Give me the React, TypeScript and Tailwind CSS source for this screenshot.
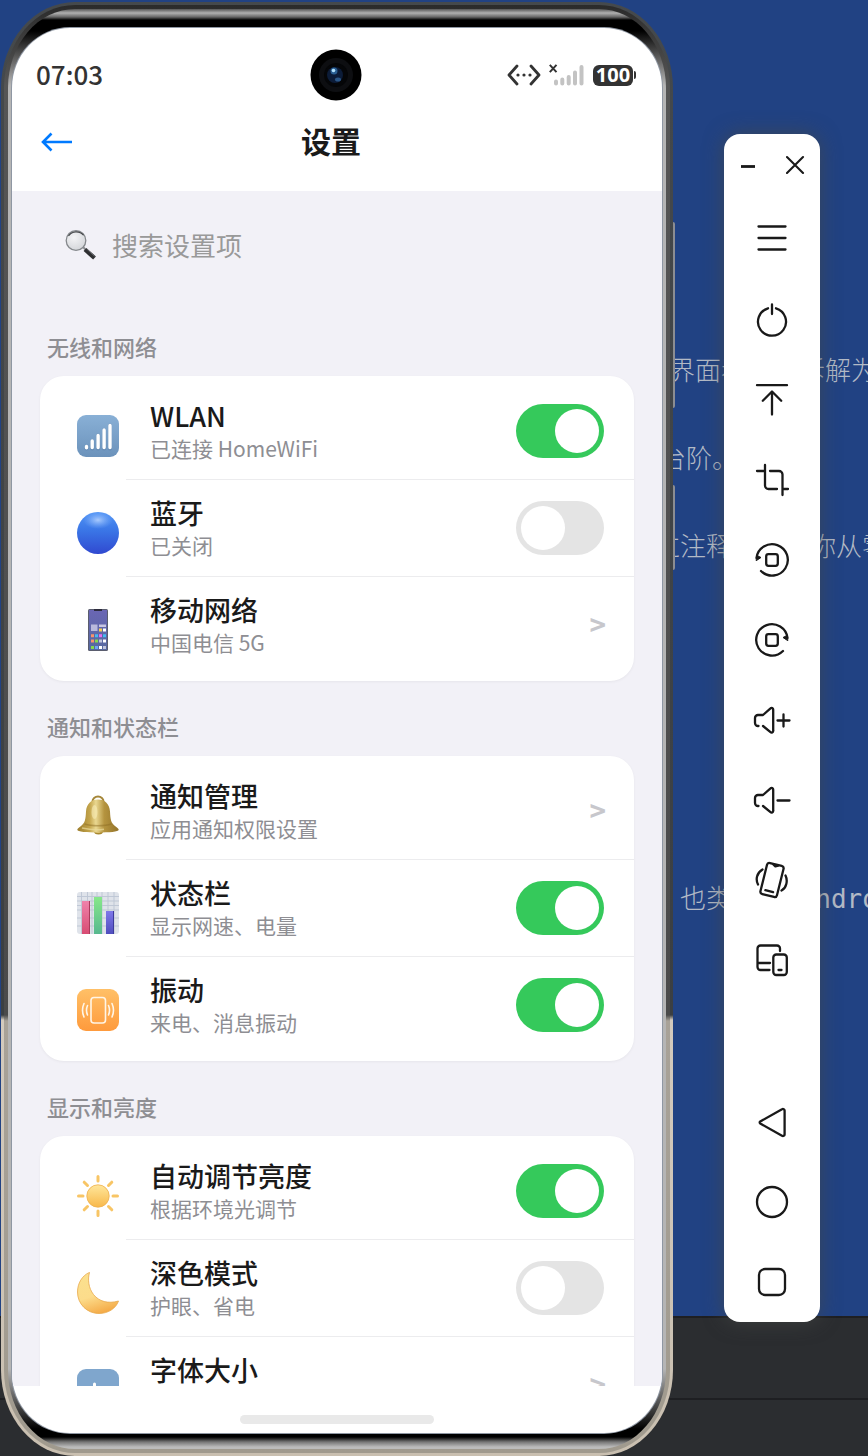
import React, { useState } from 'react';

interface SettingItem {
  id: string;
  title: string;
  subtitle: string;
  icon: React.ReactNode;
  kind: 'toggle' | 'link';
  enabled?: boolean;
}

interface SettingSection {
  title: string;
  items: SettingItem[];
}

const SearchIcon = () => (
  <svg viewBox="0 0 32 32" className="h-8 w-8 shrink-0" aria-hidden="true">
    <defs>
      <radialGradient id="lens" cx="0.4" cy="0.35" r="0.7">
        <stop offset="0" stopColor="#f4f4f6" />
        <stop offset="1" stopColor="#d3d5d9" />
      </radialGradient>
    </defs>
    <path d="M17.500 17.500 22 22" stroke="#8b8d90" strokeWidth="2" />
    <path d="m20 20.500 9.500 8.500" stroke="#2e2f31" strokeWidth="4.200" strokeLinecap="butt" />
    <path d="m21.500 19.800 8 7.500" stroke="#6d6f72" strokeWidth="0.800" />
    <circle cx="11" cy="11.500" r="9.800" fill="url(#lens)" stroke="#85888c" strokeWidth="1.300" />
    <path d="M3.500 7a9.400 9.400 0 0 1 15-.8" stroke="#46484b" strokeWidth="1.200" fill="none" />
  </svg>
);

const WlanIcon = () => (
  <svg viewBox="0 0 42 42" className="h-full w-full" aria-hidden="true">
    <defs>
      <linearGradient id="wlan" x1="0" y1="0" x2="0" y2="1">
        <stop offset="0" stopColor="#89b0d6" />
        <stop offset="1" stopColor="#6b92bb" />
      </linearGradient>
    </defs>
    <rect width="42" height="42" rx="9" fill="url(#wlan)" />
    <path d="M9.500 32v1.500M15.200 26.500v7M21.100 20.500v13M27.100 15v18.500M33 10.500v23" stroke="#5478a0" strokeWidth="4" strokeLinecap="round" opacity=".4" />
    <path d="M9.500 31.500v1.200M15.200 26v6.500M21.100 20.500v12M27.100 15v17.500M33 10.500v22" stroke="#fff" strokeWidth="3.400" strokeLinecap="round" />
  </svg>
);

const BluetoothIcon = () => (
  <svg viewBox="0 0 42 42" className="h-full w-full" aria-hidden="true">
    <defs>
      <linearGradient id="ball" x1="0" y1="0" x2="0" y2="1">
        <stop offset="0" stopColor="#4f93f5" />
        <stop offset=".45" stopColor="#3a75e6" />
        <stop offset="1" stopColor="#3049d0" />
      </linearGradient>
      <radialGradient id="shine">
        <stop offset="0" stopColor="#b5d2ff" stopOpacity=".9" />
        <stop offset="1" stopColor="#7fb0fa" stopOpacity="0" />
      </radialGradient>
    </defs>
    <circle cx="21" cy="21" r="21" fill="url(#ball)" />
    <ellipse cx="21" cy="8" rx="15" ry="9" fill="url(#shine)" />
  </svg>
);

const MobileIcon = () => (
  <svg viewBox="0 0 42 42" className="h-full w-full" aria-hidden="true">
    <defs>
      <linearGradient id="mobile" x1="0" y1="0" x2="0" y2="1">
        <stop offset="0" stopColor="#6a66b4" />
        <stop offset="1" stopColor="#56689f" />
      </linearGradient>
    </defs>
    <rect x="11" y="0" width="20" height="42" rx="1.500" fill="#5a5d6e" />
    <rect x="12" y="1" width="18" height="40" fill="url(#mobile)" />
    <rect x="17" y="0" width="8" height="2" fill="#2d2c3d" />
    <rect x="14" y="15.500" width="6.500" height="6.500" fill="#b9b9dc" />
    <rect x="22" y="15.500" width="7" height="2.500" fill="#c8c6e2" />
    <rect x="22" y="19.500" width="3" height="3" fill="#f5cf52" />
    <rect x="26" y="19.500" width="3" height="3" fill="#fff" />
    <path d="M14 25.200h3v3h-3zM14 30.500h3v3h-3z" fill="#f7936d" />
    <path d="M18 25.200h3v3h-3zM26 25.200h3v3h-3z" fill="#45b9f2" />
    <path d="M22 25.200h3v3h-3z" fill="#e56df0" />
    <path d="M18 30.500h3v3h-3zM14 37h3v3h-3z" fill="#84d84f" />
    <path d="M22 30.500h3v3h-3zM26 37h3v3h-3z" fill="#bfc3dc" />
    <path d="M26 30.500h3v3h-3zM22 37h3v3h-3z" fill="#fff" />
    <path d="M18 37h3v3h-3z" fill="#6ea6f5" />
  </svg>
);

const BellIcon = () => (
  <svg viewBox="0 0 42 42" className="h-full w-full" aria-hidden="true">
    <defs>
      <linearGradient id="bell" x1="0" y1="0" x2="1" y2="0">
        <stop offset="0" stopColor="#9c7d2c" />
        <stop offset=".3" stopColor="#c4a54c" />
        <stop offset=".45" stopColor="#ead891" />
        <stop offset=".65" stopColor="#b5943f" />
        <stop offset="1" stopColor="#94742a" />
      </linearGradient>
    </defs>
    <path d="M15.500 6.500a5.500 5 0 0 1 11 0" fill="none" stroke="#a5873a" strokeWidth="2" />
    <ellipse cx="21.500" cy="36.500" rx="4.500" ry="3" fill="#a8882f" />
    <path d="M21 4.500c-7 0-11.500 4.500-12 12-.4 8-1 11.500-5 14.500C1.500 32.800.3 33.800.3 34.800.3 37 10 37.500 21 37.500s20.700-.5 20.700-2.700c0-1-1.200-2-3.700-3.800-4-3-4.600-6.500-5-14.500-.5-7.500-5-12-12-12Z" fill="url(#bell)" />
    <path d="M7.500 29c7 2.300 20 2.300 27 0" fill="none" stroke="#8d6e24" strokeWidth="1.500" opacity=".5" />
    <path d="M5 33c8 1.800 17 2 22 1.200" fill="none" stroke="#eadb9c" strokeWidth="1.500" opacity=".7" />
    <ellipse cx="17.500" cy="17" rx="3" ry="7" fill="#f8edb8" opacity=".6" />
    <path d="M18.500 37a3 2.200 0 0 0 5 0" fill="#dbc377" />
  </svg>
);

const ChartIcon = () => (
  <svg viewBox="0 0 42 42" className="h-full w-full" aria-hidden="true">
    <defs>
      <linearGradient id="pinkBar" x1="0" y1="0" x2="0" y2="1">
        <stop offset="0" stopColor="#ef82ab" />
        <stop offset="1" stopColor="#d84c73" />
      </linearGradient>
      <linearGradient id="greenBar" x1="0" y1="0" x2="0" y2="1">
        <stop offset="0" stopColor="#87e88a" />
        <stop offset="1" stopColor="#57b88f" />
      </linearGradient>
      <linearGradient id="blueBar" x1="0" y1="0" x2="0" y2="1">
        <stop offset="0" stopColor="#7f78ea" />
        <stop offset="1" stopColor="#4f4dbd" />
      </linearGradient>
    </defs>
    <rect width="42" height="42" rx="3" fill="#dfe3ea" />
    <path d="M4.500 0v42M10.500 0v42M15 0v42M20 0v42M25 0v42M31 0v42M37 0v42M0 4.500h42M0 9h42M0 13.500h42M0 18h42M0 26h42M0 34h42" stroke="#bcc5d4" strokeWidth=".9" />
    <path d="M5 9h8v33H5z" fill="url(#pinkBar)" />
    <path d="M17 5h8v37h-8z" fill="url(#greenBar)" />
    <path d="M29 19h8v23h-8z" fill="url(#blueBar)" />
    <path d="M12.500 9v33" stroke="#a93b5c" />
    <path d="M36.500 19v23" stroke="#3d3b9b" />
  </svg>
);

const VibrateIcon = () => (
  <svg viewBox="0 0 42 42" className="h-full w-full" aria-hidden="true">
    <defs>
      <linearGradient id="vibrate" x1="0" y1="0" x2="0" y2="1">
        <stop offset="0" stopColor="#ffc067" />
        <stop offset="1" stopColor="#fe9a3c" />
      </linearGradient>
    </defs>
    <rect width="42" height="42" rx="9" fill="url(#vibrate)" />
    <g fill="none" stroke="#fff5e6" strokeWidth="1.600" strokeLinecap="round">
      <rect x="14" y="8.500" width="14.500" height="25.500" rx="3" />
      <path d="M10.500 16.500c-1.300 3-1.300 6.500 0 9.500M7 14.500c-2 4.500-2 9 0 13.500M31.500 16.500c1.300 3 1.300 6.500 0 9.500M35 14.500c2 4.500 2 9 0 13.500" />
    </g>
  </svg>
);

const SunIcon = () => (
  <svg viewBox="0 0 42 42" className="h-full w-full" aria-hidden="true">
    <defs>
      <linearGradient id="sun" x1="0" y1="0" x2="0" y2="1">
        <stop offset="0" stopColor="#ffe79c" />
        <stop offset="1" stopColor="#f8b84a" />
      </linearGradient>
    </defs>
    <path d="M21 1.500v4.500M21 36v4.500M1.500 21H6M36 21h4.500M7.200 7.200l3.300 3.300M31.500 31.500l3.300 3.300M34.800 7.200l-3.300 3.300M10.500 31.500l-3.300 3.300" stroke="#f8c565" strokeWidth="3" strokeLinecap="round" />
    <circle cx="21" cy="21" r="11.200" fill="url(#sun)" stroke="#edb04e" strokeWidth=".8" />
  </svg>
);

const MoonIcon = () => (
  <svg viewBox="0 0 42 42" className="h-full w-full" aria-hidden="true">
    <defs>
      <linearGradient id="moon" x1="0.300" y1="0" x2="0.600" y2="1">
        <stop offset="0" stopColor="#fbe08e" />
        <stop offset=".55" stopColor="#fcdc8b" />
        <stop offset="1" stopColor="#f4a945" />
      </linearGradient>
    </defs>
    <path d="M12.500.4C5 3.500.5 11.500.5 20c0 12 9.500 21.500 21.500 21.500 9 0 17-5 19.500-12.500C31 32 22 29.500 16.500 22.500 11.500 16 10.500 7.500 12.500.4Z" fill="url(#moon)" stroke="#e9a84a" strokeWidth=".8" />
  </svg>
);

const FontSizeIcon = () => (
  <svg viewBox="0 0 42 42" className="h-full w-full" aria-hidden="true">
    <rect width="42" height="42" rx="9" fill="#7fa6cd" />
    <path d="M17.500 15v17M17.500 22.500c4-3.500 9.500-1.500 9.500 4s-5.500 8-9.500 4" stroke="#fff" strokeWidth="3" strokeLinecap="round" fill="none" />
  </svg>
);

const SECTIONS: SettingSection[] = [
  {
    title: '无线和网络',
    items: [
      { id: 'wlan', title: 'WLAN', subtitle: '已连接 HomeWiFi', icon: <WlanIcon />, kind: 'toggle', enabled: true },
      { id: 'bluetooth', title: '蓝牙', subtitle: '已关闭', icon: <BluetoothIcon />, kind: 'toggle', enabled: false },
      { id: 'mobile', title: '移动网络', subtitle: '中国电信 5G', icon: <MobileIcon />, kind: 'link' },
    ],
  },
  {
    title: '通知和状态栏',
    items: [
      { id: 'notify', title: '通知管理', subtitle: '应用通知权限设置', icon: <BellIcon />, kind: 'link' },
      { id: 'statusbar', title: '状态栏', subtitle: '显示网速、电量', icon: <ChartIcon />, kind: 'toggle', enabled: true },
      { id: 'vibrate', title: '振动', subtitle: '来电、消息振动', icon: <VibrateIcon />, kind: 'toggle', enabled: true },
    ],
  },
  {
    title: '显示和亮度',
    items: [
      { id: 'brightness', title: '自动调节亮度', subtitle: '根据环境光调节', icon: <SunIcon />, kind: 'toggle', enabled: true },
      { id: 'dark', title: '深色模式', subtitle: '护眼、省电', icon: <MoonIcon />, kind: 'toggle', enabled: false },
      { id: 'font', title: '字体大小', subtitle: '标准', icon: <FontSizeIcon />, kind: 'link' },
    ],
  },
];

const SettingRow: React.FC<{ item: SettingItem }> = ({ item }) => {
  const [on, setOn] = useState(Boolean(item.enabled));

  const body = (
    <>
      <span className="mt-2.5 block h-[42px] w-[42px] shrink-0">{item.icon}</span>
      <span className="block min-w-0 flex-1 pb-0.5">
        <span className="block truncate text-[27px] leading-9 font-medium text-[#1a1a1a]">{item.title}</span>
        <span className="block truncate text-[21px] leading-7 text-[#8e8e93]">{item.subtitle}</span>
      </span>
    </>
  );

  if (item.kind === 'link') {
    return (
      <a href={`#${item.id}`} className="flex h-24 items-center gap-[31px] pr-7 pl-[37px]">
        {body}
        <span className="pb-0.5 text-[28px] font-bold text-[#c7c7cc]">&gt;</span>
      </a>
    );
  }

  return (
    <label htmlFor={item.id} className="flex h-24 items-center gap-[31px] pr-[30px] pl-[37px]">
      {body}
      <input
        id={item.id}
        type="checkbox"
        role="switch"
        checked={on}
        onChange={() => setOn(!on)}
        className="h-[54px] w-22 shrink-0 appearance-none rounded-full bg-[#e4e4e4] p-[5px] transition-colors before:block before:h-11 before:w-11 before:rounded-full before:bg-white before:content-[''] checked:bg-[#35c95b] checked:before:translate-x-[34px]"
      />
    </label>
  );
};

const StatusBar = () => (
  <div className="grid h-[94px] shrink-0 grid-cols-[1fr_auto_1fr] items-center pr-[26px] pl-6">
    <time className="pb-1 text-[26px] font-medium text-[#333]">07:03</time>
    <svg viewBox="0 0 52 52" className="h-[52px] w-[52px]" aria-hidden="true">
      <circle cx="26" cy="26" r="25.500" fill="#000" />
      <circle cx="26" cy="26" r="17" fill="#0d0e11" />
      <circle cx="26" cy="26" r="12" fill="#050608" />
      <circle cx="25" cy="26" r="8" fill="#0c1c38" />
      <circle cx="24" cy="22" r="3.500" fill="#2a5f93" />
      <circle cx="23.500" cy="21.500" r="1.800" fill="#b4e2fb" />
      <ellipse cx="28" cy="30.500" rx="3" ry="2" fill="#2b5788" />
    </svg>
    <div className="flex items-center justify-end gap-2">
      <svg viewBox="0 0 34 22" className="h-[22px] w-[34px]" aria-hidden="true">
        <path d="M10 2 2 11l8 9M24 2l8 9-8 9" fill="none" stroke="#333" strokeWidth="2.800" strokeLinecap="round" strokeLinejoin="round" />
        <g fill="#333">
          <circle cx="11" cy="11" r="1.600" />
          <circle cx="17" cy="11" r="1.600" />
          <circle cx="23" cy="11" r="1.600" />
        </g>
      </svg>
      <svg viewBox="0 0 36 22" className="h-[22px] w-9" aria-hidden="true">
        <path d="m.8.800 6.700 7.400M7.500.8.800 8.200" stroke="#333" strokeWidth="2" />
        <path d="M7 17.500v2M13.300 15.500v4M19.700 13v6.500M26 8.500v11M32.500 3v16.500" stroke="#c3c3c3" strokeWidth="4" strokeLinecap="round" />
      </svg>
      <div className="flex items-center gap-px">
        <span className="flex h-[21px] w-10 items-center justify-center rounded-md bg-[#333] font-['Noto_Sans'] text-[20px] leading-5 font-bold text-white">100</span>
        <span className="h-2 w-0.5 rounded-r bg-[#333]" />
      </div>
    </div>
  </div>
);

const Phone = () => (
  <div className="relative h-full min-w-0 flex-1 px-px pt-0.5">
    {/* side buttons */}
    <span className="absolute top-[222px] -right-px h-[186px] w-1 rounded bg-[#8b8d92]" />
    <span className="absolute top-[485px] -right-px h-[85px] w-1 rounded bg-[#8b8d92]" />

    <div className="relative h-full rounded-[74px/86px] bg-[linear-gradient(#45494c_0,#3b3f42_1013px,#d3cabd_1018px,#c9bfb0_100%)] p-[3px]">
      <div className="h-full rounded-[71px/83px] bg-[linear-gradient(#2b2b2b_0,#555_80px,#4a4a4a_1010px,#a8a298_1016px,#a09a8e_100%)] p-1">
        <div className="h-full rounded-[67px/79px] bg-[linear-gradient(#555_0,#b0b0b0_4px,#666_8px,#000_11px,#000_22px,#333_36px,#b5b5b5_76px,#b5b5b5_calc(100%-80px),#333_calc(100%-36px),#000_calc(100%-20px),#000_calc(100%-12px),#777_calc(100%-7px),#bbb_calc(100%-2px))] px-1 pt-[19px] pb-4">
          <div className="flex h-full flex-col overflow-hidden rounded-[58px/60px] bg-white shadow-[0_0_0_1px_#8f97a3]">
            <StatusBar />
            <header className="relative flex h-[69px] shrink-0 items-start justify-center">
              <button type="button" aria-label="返回" className="absolute left-[29px] h-10">
                <svg viewBox="0 0 32 20" className="h-5 w-8" fill="none" stroke="#007aff" strokeWidth="2.600" aria-hidden="true">
                  <path d="M31 10H2M10.500 1.500 2 10l8.500 8.500" />
                </svg>
              </button>
              <h1 className="pr-3 text-[30px] leading-9 font-bold text-[#1a1a1a]">设置</h1>
            </header>

            <main className="min-h-0 flex-1 overflow-hidden bg-[#f2f1f7] px-7">
              <label className="mb-0.5 flex h-[108px] items-center gap-[15px] pl-[25px]">
                <SearchIcon />
                <input
                  type="search"
                  aria-label="搜索设置项"
                  placeholder="搜索设置项"
                  className="min-w-0 flex-1 bg-transparent text-[26px] leading-9 outline-none placeholder:text-[#999]"
                />
              </label>
              {SECTIONS.map(section => (
                <section key={section.title} className="pt-[29px]">
                  <h2 className="mb-3.5 pl-[7px] text-[22px] leading-8 font-medium text-[#8e8e93]">{section.title}</h2>
                  <div className="rounded-3xl bg-white pt-[7px] pb-2 shadow-[0_1px_3px_rgba(0,0,0,0.05)]">
                    {section.items.map((item, index) => (
                      <React.Fragment key={item.id}>
                        {index > 0 && <div className="ml-[86px] h-px bg-[#ececee]" />}
                        <SettingRow item={item} />
                      </React.Fragment>
                    ))}
                  </div>
                </section>
              ))}
            </main>

            <footer className="flex h-[47px] shrink-0 items-end justify-center pb-[9px]">
              <span className="h-[9px] w-[194px] rounded-full bg-[#e9e9e9]" />
            </footer>
          </div>
        </div>
      </div>
    </div>
  </div>
);

const TOOLS: { label: string; art: React.ReactNode }[] = [
  { label: '菜单', art: <path d="M6.500 6.500h27M6.500 18h27M6.500 29.500h27" /> },
  { label: '电源', art: <path d="M16 8.300a14 14 0 1 0 8 0M20 4.500v9.500" /> },
  { label: '上滑', art: <path d="M5 5.200h30M10.800 20.800l9.200-9.300 9.200 9.300M20 12v22.500" /> },
  { label: '截屏', art: <path d="M5 11h7M13 5v20.500a3.500 3.500 0 0 0 3.500 3.500H25M18 11h9a3.500 3.500 0 0 1 3.500 3.500V35M31 29h5" /> },
  {
    label: '向左旋转',
    art: (
      <>
        <path d="M4.500 18A15.700 15.700 0 1 1 9 31" />
        <path d="m4.500 20.500 4.500-3-4-2z" fill="#191919" strokeWidth="1" />
        <rect x="14.200" y="14.200" width="11.600" height="11.600" rx="2.200" />
      </>
    ),
  },
  {
    label: '向右旋转',
    art: (
      <>
        <path d="M35.500 18A15.700 15.700 0 1 0 31 31" />
        <path d="m35.500 20.500-4.500-3 4-2z" fill="#191919" strokeWidth="1" />
        <rect x="14.200" y="14.200" width="11.600" height="11.600" rx="2.200" />
      </>
    ),
  },
  {
    label: '音量加',
    art: <path d="M6.500 26h-.5a3 3 0 0 1-3-3v-5a3 3 0 0 1 3-3h5l7.500-6.600a1.600 1.600 0 0 1 2.700 1.200v21.300a1.600 1.600 0 0 1-2.700 1.200L11 26M25.500 20.500h12M31.500 14.500v12" />,
  },
  {
    label: '音量减',
    art: <path d="M6.500 26h-.5a3 3 0 0 1-3-3v-5a3 3 0 0 1 3-3h5l7.500-6.600a1.600 1.600 0 0 1 2.700 1.200v21.300a1.600 1.600 0 0 1-2.700 1.200L11 26M25.500 20.500h12" />,
  },
  {
    label: '摇一摇',
    art: (
      <>
        <g transform="rotate(14 20 20)">
          <rect x="11.500" y="4" width="17" height="32" rx="2.500" />
          <path d="M17.500 4.500l2.500 1.500 2.500-1.500M16 31.500h8" />
        </g>
        <path d="M10.500 9.500C4.500 13 3.500 19.500 6 24.500M33.500 15.500C36 20.500 34.500 28 29.500 30.500" />
      </>
    ),
  },
  {
    label: '多设备',
    art: (
      <>
        <path d="M28 11V8.500a3 3 0 0 0-3-3H8.500a3 3 0 0 0-3 3V27a3 3 0 0 0 3 3H17.500M6 23h12" />
        <rect x="21.300" y="14.500" width="13.500" height="20.500" rx="3" />
        <path d="M26.500 30h3" />
      </>
    ),
  },
];

const NAV_KEYS: { label: string; art: React.ReactNode }[] = [
  { label: '返回键', art: <path d="M8.200 21.500 30 33.800a1.700 1.700 0 0 0 2.600-1.500V8.700A1.700 1.700 0 0 0 30 7.200L8.200 19.500a1.200 1.200 0 0 0 0 2z" /> },
  { label: '主页键', art: <circle cx="20" cy="20" r="15" /> },
  { label: '最近任务', art: <rect x="7" y="7" width="26" height="26" rx="6" /> },
];

const ToolButton: React.FC<{ label: string; children: React.ReactNode }> = ({ label, children }) => (
  <button type="button" aria-label={label} className="flex h-20 w-full items-center justify-center">
    <svg viewBox="0 0 40 40" className="h-10 w-10" fill="none" stroke="#191919" strokeWidth="2.300" strokeLinecap="round" strokeLinejoin="round" aria-hidden="true">
      {children}
    </svg>
  </button>
);

const Toolbar = () => (
  <aside className="my-[134px] mr-12 ml-[50px] flex w-24 shrink-0 flex-col justify-between rounded-2xl bg-white shadow-[0_0_20px_rgba(70,72,70,0.7)]">
    <div>
      <div className="mb-1 flex h-[62px] items-center justify-between px-3.5">
        <button type="button" aria-label="最小化">
          <svg viewBox="0 0 20 20" className="h-5 w-5" stroke="#191919" strokeWidth="2.800" aria-hidden="true">
            <path d="M3 11.500h14" />
          </svg>
        </button>
        <button type="button" aria-label="关闭">
          <svg viewBox="0 0 20 20" className="h-5 w-5" stroke="#191919" strokeWidth="2.100" strokeLinecap="round" aria-hidden="true">
            <path d="m1 2 16 16M17 2 1 18" />
          </svg>
        </button>
      </div>
      {TOOLS.map(tool => (
        <ToolButton key={tool.label} label={tool.label}>{tool.art}</ToolButton>
      ))}
    </div>
    <div>
      {NAV_KEYS.map(key => (
        <ToolButton key={key.label} label={key.label}>{key.art}</ToolButton>
      ))}
    </div>
  </aside>
);

// Editor window that sits behind the emulator
const EditorBackdrop = () => (
  <div className="absolute inset-0 flex flex-col overflow-hidden bg-[#2b2d30]">
    <div className="min-h-0 flex-1 overflow-hidden bg-[#214283] pt-[327px] font-['DejaVu_Sans_Mono','Noto_Sans_CJK_SC',monospace] text-[26px] leading-[88px] font-light whitespace-nowrap text-[#b3bac6]">
      <p className="pl-[669px]">界面看作、拆解为</p>
      <p className="pl-[660px]">台阶。</p>
      <p className="pl-[654px]">过注释，带着你从零</p>
      <p className="mt-[264px] pl-[680px]">也类似于 Android</p>
    </div>
    <div className="h-[82px] shrink-0 border-t-2 border-[#1e1f22]" />
    <div className="h-[58px] shrink-0 border-t-2 border-[#1e1f22]" />
  </div>
);

const App: React.FC = () => {
  return (
    <div className="relative h-screen overflow-hidden font-['Noto_Sans_CJK_SC',sans-serif]">
      <EditorBackdrop />
      <div className="relative flex h-full">
        <Phone />
        <Toolbar />
      </div>
    </div>
  );
};

export default App;
